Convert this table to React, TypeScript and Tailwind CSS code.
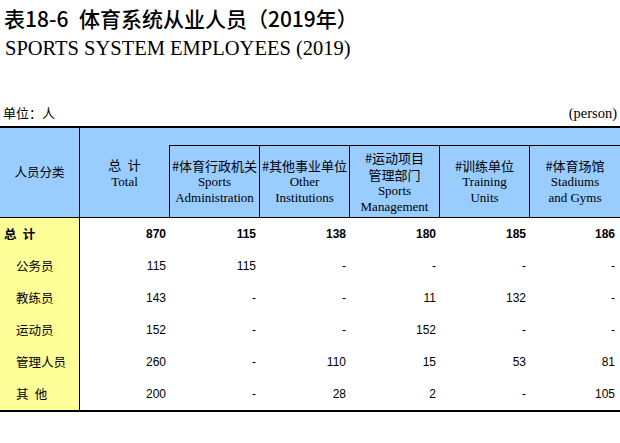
const cjk = "font-['Noto_Sans_CJK_SC',sans-serif]";
const serif = "font-['Liberation_Serif','Noto_Sans_CJK_SC',serif]";
const arial = "font-['Liberation_Sans',Arial,sans-serif]";
const cols = 'grid grid-cols-[80px_89px_90px_90px_90px_90px_91px]';

const subHeads = [
  { zh: ['#体育行政机关'], en: ['Sports', 'Administration'] },
  { zh: ['#其他事业单位'], en: ['Other', 'Institutions'] },
  { zh: ['#运动项目', '管理部门'], en: ['Sports', 'Management'] },
  { zh: ['#训练单位'], en: ['Training', 'Units'] },
  { zh: ['#体育场馆'], en: ['Stadiums', 'and Gyms'] },
];

const rows = [
  { name: '总\u2002计', bold: true, values: ['870', '115', '138', '180', '185', '186'] },
  { name: '公务员', values: ['115', '115', '-', '-', '-', '-'] },
  { name: '教练员', values: ['143', '-', '-', '11', '132', '-'] },
  { name: '运动员', values: ['152', '-', '-', '152', '-', '-'] },
  { name: '管理人员', values: ['260', '-', '110', '15', '53', '81'] },
  { name: '其\u2002他', values: ['200', '-', '28', '2', '-', '105'] },
];

export default function App() {
  return (
    <div className="w-[620px] h-[443px] bg-white text-black overflow-hidden">
      {/* Titles */}
      <div className={`${cjk} pt-[6px] pl-[4px] text-[21px] leading-[24px] font-medium whitespace-nowrap`}>
        表18-6{'\u2002'}体育系统从业人员（2019年）
      </div>
      <div className={`${serif} mt-[5px] pl-[5px] text-[20.5px] leading-[26px] whitespace-nowrap`}>
        SPORTS SYSTEM EMPLOYEES (2019)
      </div>

      {/* Unit line */}
      <div className="mt-[44px] flex items-center justify-between h-[16px] pl-[3px] pr-[3px]">
        <span className={`${cjk} text-[13px] leading-[16px]`}>单位：人</span>
        <span className={`${serif} text-[14.5px] leading-[16px]`}>(person)</span>
      </div>

      {/* Table */}
      <div className="mt-[5px] border-t-2 border-b-2 border-black">
        {/* Header */}
        <div className={`${cols} grid-rows-[17px_72px] bg-[#99CCFF] border-b border-black`}>
          <div className={`${cjk} row-span-2 border-r border-black flex items-center justify-center text-[12.5px]`}>
            人员分类
          </div>
          <div className="row-span-2 flex flex-col items-center justify-center">
            <span className={`${cjk} text-[13px] leading-[18px]`}>总{'\u2002'}计</span>
            <span className={`${serif} text-[13px] leading-[16px]`}>Total</span>
          </div>
          <div className="col-span-5" />
          {subHeads.map((h, i) => (
            <div
              key={i}
              className="border-t border-l border-black flex flex-col items-center justify-center text-center whitespace-nowrap"
            >
              <span className={`${cjk} text-[13px] leading-[17px]`}>
                {h.zh.map((t, j) => (
                  <span key={t}>
                    {j > 0 && <br />}
                    {t}
                  </span>
                ))}
              </span>
              <span className={`${serif} text-[13px] leading-[16px]`}>
                {h.en.map((t, j) => (
                  <span key={t}>
                    {j > 0 && <br />}
                    {t}
                  </span>
                ))}
              </span>
            </div>
          ))}
        </div>

        {/* Body */}
        {rows.map((r) => (
          <div key={r.name} className={`${cols} h-[32px]`}>
            <div
              className={`${cjk} bg-[#FFFF99] border-r border-black flex items-center text-[12.5px] ${
                r.bold ? 'pl-[4px] font-bold' : 'pl-[16px]'
              }`}
            >
              {r.name}
            </div>
            {r.values.map((v, i) => (
              <div
                key={i}
                className={`${arial} flex items-center justify-end text-[12px] ${
                  i === 5 ? 'pr-[5px]' : 'pr-[3px]'
                } ${r.bold ? 'font-bold' : ''}`}
              >
                {v}
              </div>
            ))}
          </div>
        ))}
      </div>
    </div>
  );
}
